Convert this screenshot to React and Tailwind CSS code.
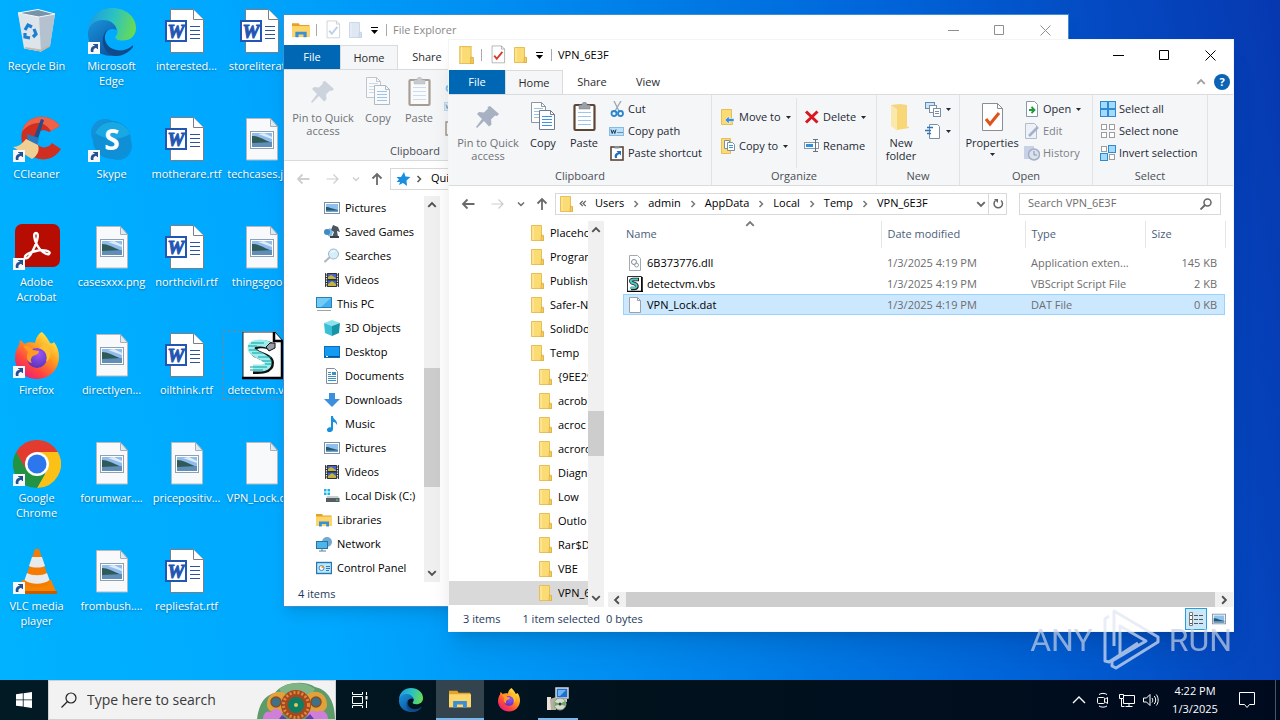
import clsx from 'clsx';

/* ---------- desktop icons ---------- */

const ShortcutArrow = () => (
  <g>
    <rect x="0" y="34" width="12" height="12" fill="#f6f8fb" />
    <path d="M3 44c-1-4 1-6 4-6.300L5 36.500V36h5v5h-.7L8 39.700C5.500 40.500 5 42 5.500 44z" fill="#24518f" />
  </g>
);

const RecycleBinIcon = () => (
  <svg viewBox="0 0 48 48" className="w-12 h-12">
    <path d="M5 5l20-3.500L42 6l-5 32-9 5.500-16-3z" fill="#d3dce4" />
    <path d="M5 5l20 3 17-2-5 32-9 5.500z" fill="#b4c2cf" />
    <path d="M5 5l21 3 2 35.500-17-3z" fill="#dde4ea" />
    <path d="M5 5l20-3.500L42 6l-16 3z" fill="#7793a8" stroke="#f4f8fb" strokeWidth="1" />
    <path d="M12 39l16 2.500 9-5-.5 2.500-8.500 4.500-16-3z" fill="#c9b5a8" />
    <g fill="none" stroke="#1c7fd1" strokeWidth="3.200">
      <path d="M12 22l3-5 4 2" />
      <path d="M21 21l2 5-3 3" />
      <path d="M17 30l-5-1v-4" />
    </g>
  </svg>
);

const EdgeIcon = ({ className = 'w-12 h-12', shortcut = false }) => (
  <svg viewBox="0 0 48 48" className={className}>
    <defs>
      <linearGradient id="edgeTop" x1="0" y1="0.4" x2="1" y2="0.6">
        <stop offset="0" stopColor="#1b9de2" />
        <stop offset="0.5" stopColor="#2cc3c0" />
        <stop offset="1" stopColor="#6bdc4f" />
      </linearGradient>
      <linearGradient id="edgeLeft" x1="0" y1="0" x2="0.6" y2="1">
        <stop offset="0" stopColor="#1a94dd" />
        <stop offset="1" stopColor="#0c59a4" />
      </linearGradient>
    </defs>
    <path d="M0 22C1 9 11 0 24 0c14 0 24 9 24 20 0 8-6 12.500-13 12.500-6 0-8.500-2-7.500-4 3-3 3-8-2-11C17 12 5 14 0 22z" fill="url(#edgeTop)" />
    <path d="M0 24c1-8 8-12 15-12 8 0 13.500 5 13.500 10-7-3-12 2-12 9 0 8 5 14 12 16.500C12 50-1 39 0 24z" fill="url(#edgeLeft)" />
    <path d="M20 21c-5 5-4 15 3 19 7 4 15 3 21-2 1-1 1.500 0 1 1-6 8-15 10-20 8.600C14 44 11 28 20 21z" fill="#114a8b" />
    {shortcut && <ShortcutArrow />}
  </svg>
);

const CCleanerIcon = () => (
  <svg viewBox="0 0 48 48" className="w-12 h-12">
    <path d="M47 10C36-4 13-2 9 16 5 34 22 46 34 43c6-1 11-5 14-10l-9-6c-4 6-13 6-16-1-3-8 5-15 13-10z" fill="#cf2f21" />
    <path d="M47 10C36-4 13-2 9 16c7-9 20-14 29-1z" fill="#ee6348" />
    <path d="M28 3l3 1-6 19-4-2z" fill="#254e88" />
    <path d="M14 18l12 4-2 8-9-3z" fill="#2b78bd" />
    <path d="M13 23l12 6c2 6-1 11-6 14L0 31c5 0 9-3 13-8z" fill="#f0cf94" />
    <ShortcutArrow />
  </svg>
);

const SkypeIcon = () => (
  <svg viewBox="0 0 48 48" className="w-12 h-12">
    <circle cx="17" cy="17" r="14" fill="#1591d8" />
    <circle cx="30" cy="30" r="14" fill="#0a93dc" />
    <circle cx="24" cy="24" r="19" fill="#0e8fd6" />
    <path d="M7 17a19 19 0 0 1 35 1c-10 7-25 6-35-1z" fill="#18a9e4" />
    <text x="24" y="34" textAnchor="middle" fontFamily="Open Sans, sans-serif" fontWeight="700" fontSize="28" fill="#fff">S</text>
    <ShortcutArrow />
  </svg>
);

const AcrobatIcon = () => (
  <svg viewBox="0 0 48 48" className="w-12 h-12">
    <rect x="2" y="0" width="45" height="43" rx="7" fill="#b70c02" />
    <path d="M23 9c-3 0-2 6 1 12s9 10 12 9c3-3-6-5-13-3-6 1-12 4-11 7 3 2 7-5 10-12s4-13 1-13z" fill="none" stroke="#fff" strokeWidth="2.400" strokeLinejoin="round" />
    <ShortcutArrow />
  </svg>
);

const FirefoxIcon = ({ className = 'w-12 h-12', shortcut = false }) => (
  <svg viewBox="0 0 48 48" className={className}>
    <defs>
      <linearGradient id="foxBody" x1="0.85" y1="0.05" x2="0.2" y2="0.95">
        <stop offset="0" stopColor="#fff24a" />
        <stop offset="0.4" stopColor="#ff9a1f" />
        <stop offset="0.75" stopColor="#ff4242" />
        <stop offset="1" stopColor="#e6207b" />
      </linearGradient>
      <radialGradient id="foxGlobe" cx="0.6" cy="0.3" r="0.8">
        <stop offset="0" stopColor="#9a55f5" />
        <stop offset="1" stopColor="#5130b5" />
      </radialGradient>
    </defs>
    <path d="M29 0c4 4 6 7 8 11 2 1 3 0 4-1 3 4 5 9 5 15 0 13-10 22-22 22S2 38 2 26c0-6 2-10 4-13l1-5c2 1 3 2 4 4 4-2 8-2 11-1 1-5 3-9 7-11z" fill="url(#foxBody)" />
    <circle cx="24" cy="26" r="10" fill="url(#foxGlobe)" />
    <path d="M10 14c5-1 8 1 10 4l6 1c0 3-3 4-6 5-2 2-3 4-1 7-6-1-6-7-4-11z" fill="#ff9a24" />
    <path d="M26 16c7 2 9 8 7 14 6-4 6-13-1-19z" fill="#ffbf33" />
    {shortcut && <ShortcutArrow />}
  </svg>
);

const ChromeIcon = () => (
  <svg viewBox="0 0 48 48" className="w-12 h-12">
    <path d="M3.200 12A24 24 0 0 1 44.800 12L24 24z" fill="#e33b2e" />
    <path d="M44.800 12A24 24 0 0 1 24 48l10-18-10-18z" fill="#fbc116" />
    <path d="M24 48A24 24 0 0 1 3.200 12L14 30l18 4z" fill="#229342" />
    <path d="M3.200 12L13.600 30 24 12h20.800L24 8z" fill="#e33b2e" />
    <circle cx="24" cy="24" r="12" fill="#fff" />
    <circle cx="24" cy="24" r="9.500" fill="#2d77ee" />
    <ShortcutArrow />
  </svg>
);

const VlcIcon = () => (
  <svg viewBox="0 0 48 48" className="w-12 h-12">
    <path d="M9 32h29l6 14H4z" fill="#f78400" />
    <path d="M4 43h40v3H4z" fill="#c85c00" />
    <path d="M22 1h4l11 34c-5 6-21 6-26 0z" fill="#f57c00" />
    <path d="M19 9h10l3 9c-4 2-12 2-16 0z" fill="#e9eaec" />
    <path d="M14 25c5 3 15 3 20 0l2.500 7c-6 5-19 5-25 0z" fill="#e9eaec" />
    <ShortcutArrow />
  </svg>
);

const WordIcon = () => (
  <svg viewBox="0 0 48 48" className="w-12 h-12">
    <path d="M7.500 1.500h23l10 10v33h-33z" fill="#fff" stroke="#7a7f86" />
    <path d="M30.500 1.500v10h10" fill="#fff" stroke="#7a7f86" />
    <path d="M27 18.500h10M27 22.500h10M27 26.500h10M27 30.500h10" stroke="#2b579a" strokeWidth="1" />
    <rect x="3" y="13" width="20" height="20" fill="#fff" stroke="#2356b2" strokeWidth="2" />
    <text x="13" y="30" textAnchor="middle" fontFamily="Liberation Serif, serif" fontWeight="700" fontStyle="italic" fontSize="19" fill="#2356b2" stroke="#2356b2">W</text>
  </svg>
);

const BlankPage = () => (
  <g>
    <path d="M8.500 2.500h24l7 8v33.500h-31z" fill="#f8f9fa" stroke="#b4bac0" />
    <path d="M32.500 2.500v8h7z" fill="#dfeaf2" stroke="#a5b0ba" />
  </g>
);

const Landscape = () => (
  <g>
    <rect x="12.500" y="15.500" width="23" height="17" fill="#fff" stroke="#8fa0b0" />
    <rect x="14" y="17" width="20" height="14" fill="#8fbcec" />
    <path d="M14 20c6 0 10 3 20 7v4H14z" fill="#2f5a58" />
    <path d="M14 27l20-1v5H14z" fill="#5f8eb8" />
    <path d="M20 18l6-1 8 4v2z" fill="#dcecf9" />
  </g>
);

const ImageFileIcon = () => (
  <svg viewBox="0 0 48 48" className="w-12 h-12">
    <BlankPage />
    <Landscape />
  </svg>
);

const BlankFileIcon = () => (
  <svg viewBox="0 0 48 48" className="w-12 h-12">
    <BlankPage />
  </svg>
);

const ScriptIcon = ({ className = 'w-12 h-12' }) => (
  <svg viewBox="0 0 48 48" className={className}>
    <path d="M5 0h32l8 9v37H5z" fill="#fff" stroke="#222" strokeWidth="1" />
    <path d="M36 0v9h9M44 9v37M4 46h41" fill="none" stroke="#000" strokeWidth="2.500" />
    <path d="M33 15c-4-4-18-4-18 2 0 7 17 7 17 14 0 7-9 7-17 7" fill="none" stroke="#111" strokeWidth="8" />
    <path d="M31 13c-5-3-18-3-18 3 0 7 17 8 17 15 0 6-9 5-15 5" fill="none" stroke="#9aeeee" strokeWidth="7" />
    <path d="M13 11h13M10 14h9M11 18h9M14 21h11M20 25h13M24 29h10M27 32h7M12 35h17M12 38h13" stroke="#0f9a9c" strokeWidth="1" />
    <path d="M28 15l4-4h5v5l-6 3z" fill="#9aa0a6" stroke="#111" />
  </svg>
);

/* ---------- small icons ---------- */

const FolderIcon = ({ className = 'w-4 h-4' }) => (
  <svg viewBox="0 0 16 16" className={clsx('shrink-0', className)}>
    <path d="M2.500.5h10V12l2 1v2.500h-12z" fill="#fbdc74" stroke="#e9bf55" />
    <path d="M12.500 10l2 .5v5h-2.500z" fill="#f6cf5c" stroke="#e0b348" />
    <path d="M4 1v14" stroke="#fdebab" />
  </svg>
);

const ExplorerIcon = ({ className = 'w-4 h-4' }) => (
  <svg viewBox="0 0 16 16" className={clsx('shrink-0', className)}>
    <path d="M0 2h6l1 1.500h8.500V14H0z" fill="#e6a12a" />
    <path d="M0 4.500h16V14H0z" fill="#fdd568" />
    <path d="M3 14.500V9.500h10v5h-2.800V12H5.800v2.500z" fill="#3b8fd4" />
  </svg>
);

const PictureIcon = ({ className = 'w-4 h-4' }) => (
  <svg viewBox="0 0 16 16" className={clsx('shrink-0', className)}>
    <rect x=".5" y="2.500" width="15" height="11" fill="#fff" stroke="#7d8fa3" />
    <rect x="2" y="4" width="12" height="8" fill="#8cc1ef" />
    <path d="M2 7c4 0 6 2 12 3v2H2z" fill="#29566a" />
    <path d="M2 10.500h12V12H2z" fill="#6ba3cf" />
  </svg>
);

const GamesIcon = () => (
  <svg viewBox="0 0 16 16" className="w-4 h-4 shrink-0">
    <path d="M3 6l3-2 3 4-2 5-3-1z" fill="#7db8df" />
    <circle cx="3" cy="8" r="3" fill="#3e8ac4" />
    <path d="M9 1l5 2 2 5-3-1 1 6H8l2-5-3-2z" fill="#4c5661" />
    <path d="M6 12h9v2H6z" fill="#39424c" />
  </svg>
);

const SearchesIcon = () => (
  <svg viewBox="0 0 16 16" className="w-4 h-4 shrink-0">
    <path d="M6 9l-5.500 5" stroke="#b0b7be" strokeWidth="2" />
    <circle cx="9.500" cy="6" r="5" fill="#d6edfa" stroke="#9fb6c6" />
    <path d="M7 5c1-2 3-2 4-2" stroke="#fff" fill="none" />
  </svg>
);

const VideosIcon = () => (
  <svg viewBox="0 0 16 16" className="w-4 h-4 shrink-0">
    <rect x="1" y="1" width="14" height="14" fill="#2c3136" />
    <path d="M2.500 1v14M13.500 1v14" stroke="#e8e8e8" strokeWidth="1.200" strokeDasharray="1.500 1" />
    <rect x="4" y="2" width="8" height="5" fill="#4d63c8" />
    <rect x="4" y="8.500" width="8" height="5.500" fill="#3c62c4" />
    <path d="M4 5l3-2 5 3v1H4zM4 12l4-3 4 3v2H4z" fill="#c3b340" />
  </svg>
);

const ComputerIcon = () => (
  <svg viewBox="0 0 16 16" className="w-4 h-4 shrink-0">
    <rect x=".5" y="1.500" width="15" height="10" fill="#3fb2ee" stroke="#2a7fb8" />
    <path d="M1 2h14L5 11H1z" fill="#73ccf6" />
    <path d="M1 14.500h14" stroke="#9aa4ad" />
  </svg>
);

const CubeIcon = () => (
  <svg viewBox="0 0 16 16" className="w-4 h-4 shrink-0">
    <path d="M0 3l8-3 8 3-8 3z" fill="#8be3ee" />
    <path d="M0 3l8 3v10l-7-3z" fill="#39c0d4" />
    <path d="M16 3L8 6v10l7-3z" fill="#1793aa" />
  </svg>
);

const DesktopIcon = () => (
  <svg viewBox="0 0 16 16" className="w-4 h-4 shrink-0">
    <rect x=".5" y="2.500" width="15" height="11" fill="#149bf0" stroke="#0a6ec0" />
    <path d="M1 12.500h14" stroke="#0b4f90" />
    <path d="M2 12.500h2" stroke="#fff" />
  </svg>
);

const DocumentsIcon = () => (
  <svg viewBox="0 0 16 16" className="w-4 h-4 shrink-0">
    <path d="M2.500.5h8l3 3v12h-11z" fill="#fff" stroke="#83909c" />
    <path d="M4 4.500h3M4 6.500h3M4 8.500h8M4 10.500h8M4 12.500h8" stroke="#3f8fc4" />
    <rect x="8" y="4" width="4" height="3" fill="#3f8fc4" />
  </svg>
);

const DownloadsIcon = () => (
  <svg viewBox="0 0 16 16" className="w-4 h-4 shrink-0">
    <path d="M5 1h6v6h5l-8 8-8-8h5z" fill="#3b8fdc" />
  </svg>
);

const MusicIcon = () => (
  <svg viewBox="0 0 16 16" className="w-4 h-4 shrink-0">
    <path d="M7 0h2c0 4 5 4 4 9-1-2-2-3-4-3v7c0 4-6 4-6 1 0-2 2-3 4-2.500z" fill="#1490dc" />
  </svg>
);

const DiskIcon = () => (
  <svg viewBox="0 0 16 16" className="w-4 h-4 shrink-0">
    <path d="M0 1h2.500v2.500H0zM3.500 1H6v2.500H3.500zM0 4.500h2.500V7H0zM3.500 4.500H6V7H3.500z" fill="#19b5ea" />
    <path d="M3 8h11l1.500 2.500H2z" fill="#c9ced2" />
    <rect x="2" y="10" width="13.500" height="4" fill="#555d63" />
    <rect x="12" y="11.500" width="2" height="1" fill="#58e08a" />
  </svg>
);

const NetworkPcIcon = () => (
  <svg viewBox="0 0 16 16" className="w-4 h-4 shrink-0">
    <circle cx="11" cy="6" r="5" fill="#6fa9d4" />
    <rect x=".5" y="5.500" width="11" height="7" fill="#4bb6ea" stroke="#2a72a5" />
    <path d="M3 15h7M6 13v2" stroke="#5d7d92" />
  </svg>
);

const ControlPanelIcon = () => (
  <svg viewBox="0 0 16 16" className="w-4 h-4 shrink-0">
    <rect x=".5" y="2.500" width="15" height="11" fill="#bfe5f8" stroke="#2478b3" strokeWidth="1.400" />
    <circle cx="5.500" cy="8" r="2.500" fill="#fff" stroke="#3a8cc4" />
    <path d="M10 6.500h4M10 8.500h4M10 10.500h3" stroke="#2f7cb8" />
    <path d="M5.500 8V5.500A2.500 2.500 0 0 1 8 8z" fill="#f0a030" />
  </svg>
);

const CaretDown = ({ className = 'w-[7px] h-1' }) => (
  <svg viewBox="0 0 7 4" className={clsx('shrink-0', className)}>
    <path d="M0 0h7L3.500 4z" fill="currentColor" />
  </svg>
);

const Chevron = ({ dir = 'right', className = 'w-2 h-2' }) => {
  const paths = {
    right: 'M2.500 1l3 3-3 3',
    down: 'M1 2.500l3 3 3-3',
    up: 'M1 5.500l3-3 3 3',
    left: 'M5.500 1l-3 3 3 3'
  };
  return (
    <svg viewBox="0 0 8 8" className={clsx('shrink-0', className)}>
      <path d={paths[dir]} fill="none" stroke="currentColor" strokeWidth="1.500" />
    </svg>
  );
};

const Arrow = ({ dir = 'left' }) => {
  const paths = {
    left: 'M13.500 7H2M6.500 2.500L2 7l4.500 4.500',
    right: 'M.5 7H12M7.500 2.500L12 7l-4.500 4.500',
    up: 'M7 13V2M2.500 6.500L7 2l4.500 4.500'
  };
  return (
    <svg viewBox="0 0 14 14" className="w-3.5 h-3.5">
      <path d={paths[dir]} fill="none" stroke="currentColor" strokeWidth={dir === 'right' ? 1.2 : 1.8} />
    </svg>
  );
};

/* ---------- ribbon icons ---------- */

const PinIcon = () => (
  <svg viewBox="0 0 32 32" className="w-8 h-8">
    <path d="M18 4l9 8-2 2-2-.5-4 4 .5 5-2.500 2-5-5.500L5 26l-1-1 6-8-5-5 2-2 5 .5 4-4-.5-1.500z" fill="#a7b1c2" />
  </svg>
);

const CopyIcon = () => (
  <svg viewBox="0 0 32 32" className="w-8 h-8">
    <path d="M4.500.5h10l4 4v16h-14z" fill="#fff" stroke="#8a97a8" />
    <path d="M14.500.5v4h4" fill="none" stroke="#8a97a8" />
    <path d="M7 6.500h9M7 9.500h9M7 12.500h9M7 15.500h9" stroke="#9dbfe2" />
    <path d="M12.500 8.500h11l4 4v15h-15z" fill="#fff" stroke="#6f7d8e" />
    <path d="M23.500 8.500v4h4" fill="none" stroke="#6f7d8e" />
    <path d="M15 14.500h10M15 17.500h10M15 20.500h10M15 23.500h10" stroke="#3d94e6" />
  </svg>
);

const PasteIcon = () => (
  <svg viewBox="0 0 32 32" className="w-8 h-8">
    <rect x="6.500" y="3" width="20" height="25" rx="1" fill="#fff" stroke="#5b4636" strokeWidth="2.200" />
    <path d="M10 10.500h13M10 14.500h13M10 18.500h13M10 22.500h13" stroke="#9cc6ea" />
    <path d="M11 7V3h3c0-4 5-4 5 0h3v4z" fill="#9aa0a6" stroke="#757a80" strokeWidth=".5" />
  </svg>
);

const CutIcon = () => (
  <svg viewBox="0 0 16 16" className="w-4 h-4">
    <path d="M5 0l5 10M12 0L6 10" stroke="#9aa7b4" strokeWidth="1.300" />
    <circle cx="5" cy="12.500" r="2.500" fill="none" stroke="#2a86cf" strokeWidth="1.800" />
    <circle cx="11.500" cy="12.500" r="2.500" fill="none" stroke="#2a86cf" strokeWidth="1.800" />
  </svg>
);

const CopyPathIcon = () => (
  <svg viewBox="0 0 16 16" className="w-4 h-4">
    <rect x=".5" y="4.500" width="14" height="8" fill="#bfe1f8" stroke="#84bce6" />
    <path d="M2 6.500l1.200 4L4.500 7l1.300 3.500L7 6.500" fill="none" stroke="#193a5c" />
    <path d="M8.500 9.500h5" stroke="#193a5c" strokeDasharray="1 1" />
  </svg>
);

const PasteShortcutIcon = () => (
  <svg viewBox="0 0 16 16" className="w-4 h-4">
    <rect x="2" y="2" width="12" height="13" fill="#fff" stroke="#5b4636" strokeWidth="1.600" />
    <path d="M5.500 1h5v2.500h-5z" fill="#8a8f95" />
    <path d="M6 13c-1-4 1-5 3-5.500L7.500 6H12v4.500L10.500 9C8 10 7.500 11 8 13z" fill="#1f6fbf" />
  </svg>
);

const MoveToIcon = () => (
  <svg viewBox="0 0 16 16" className="w-4 h-4">
    <path d="M1.500.5h10V12l1 1v2.500h-11z" fill="#fbdc74" stroke="#e9bf55" />
    <path d="M5 11l4-4v2.500h5v3H9V15z" fill="#3b8fdc" stroke="#fff" strokeWidth=".5" />
  </svg>
);

const CopyToIcon = () => (
  <svg viewBox="0 0 16 16" className="w-4 h-4">
    <path d="M1.500.5h9v15h-9z" fill="#fbdc74" stroke="#e9bf55" />
    <path d="M4.500 2.500h5v8h-5z" fill="#fff" stroke="#7b8ea3" />
    <path d="M7.500 4.500h5l2 2v6h-7z" fill="#fff" stroke="#7b8ea3" />
    <path d="M9 7.500h4M9 9.500h4" stroke="#3d94e6" />
  </svg>
);

const DeleteIcon = () => (
  <svg viewBox="0 0 16 16" className="w-4 h-4">
    <path d="M2 2.500l11.500 11M13.500 2.500L2 13.500" stroke="#d8171f" strokeWidth="3" />
  </svg>
);

const RenameIcon = () => (
  <svg viewBox="0 0 16 16" className="w-4 h-4">
    <rect x=".5" y="4.500" width="14" height="6" fill="#fff" stroke="#8c9aa8" />
    <rect x="2" y="6" width="7" height="3" fill="#2f8fe0" />
    <path d="M9 1.500h5M11.500 1.500v12M9 13.500h5" stroke="#66727f" />
  </svg>
);

const NewFolderIcon = () => (
  <svg viewBox="0 0 32 32" className="w-8 h-8">
    <path d="M6 3l9-1 7 1v21H6z" fill="#f4d584" />
    <path d="M6 3l6 4v22l-6-5z" fill="#fbe8ad" />
    <path d="M12 7l9-3v20l3 1v1l-12 2z" fill="#f8d776" />
  </svg>
);

const NewItemIcon = () => (
  <svg viewBox="0 0 16 16" className="w-4 h-4">
    <rect x=".5" y="1.500" width="9" height="6" fill="#cfe5f7" stroke="#5c8db8" />
    <rect x="4.500" y="4.500" width="7" height="7" fill="#fff" stroke="#7b8ea3" />
    <rect x="8.500" y="7.500" width="7" height="8" fill="#fff" stroke="#7b8ea3" />
    <path d="M10 10.500h4M10 12.500h4" stroke="#7b8ea3" />
  </svg>
);

const EasyAccessIcon = () => (
  <svg viewBox="0 0 16 16" className="w-4 h-4">
    <path d="M4.500 1.500h8l2 2v12h-10z" fill="#fff" stroke="#7b8ea3" />
    <path d="M2 4.500h6M0 7.500h6M2 10.500h4" stroke="#2b74b8" strokeWidth="1.500" />
  </svg>
);

const PropertiesIcon = ({ className = 'w-8 h-8', tick = '#e0521c' }) => (
  <svg viewBox="0 0 32 32" className={className}>
    <path d="M6.500 1.500h15l5 5v22h-20z" fill="#fff" stroke="#8a8f95" />
    <path d="M21.500 1.500v5h5" fill="none" stroke="#8a8f95" />
    <path d="M10 17l4 5 9-11" fill="none" stroke={tick} strokeWidth="3" />
  </svg>
);

const OpenIcon = () => (
  <svg viewBox="0 0 16 16" className="w-4 h-4">
    <path d="M2.500.5h8l3 3v12h-11z" fill="#fff" stroke="#8a97a8" />
    <path d="M5 9h4.500M7.500 6l3 3-3 3" fill="none" stroke="#1c9a3c" strokeWidth="1.800" />
  </svg>
);

const EditIcon = () => (
  <svg viewBox="0 0 16 16" className="w-4 h-4">
    <path d="M1.500.5h9l2 2v13h-11z" fill="#eef1f8" stroke="#b3bccb" />
    <path d="M5 13L14 4" stroke="#a3b1ca" strokeWidth="2.500" />
  </svg>
);

const HistoryIcon = () => (
  <svg viewBox="0 0 16 16" className="w-4 h-4">
    <path d="M0 1h10v13H0z" fill="#c9d1e6" />
    <circle cx="10" cy="9.500" r="5.500" fill="#dbe2ee" stroke="#a3afc4" strokeWidth="1.500" />
    <path d="M10 6v4h3" fill="none" stroke="#8593ad" />
  </svg>
);

const TilesIcon = ({ filled }) => (
  <svg viewBox="0 0 16 16" className="w-4 h-4">
    {[[1, 1], [9, 1], [1, 9], [9, 9]].map(([x, y], i) => {
      const on = filled.includes(i);
      return (
        <rect
          key={i}
          x={on ? x - 0.5 : x + 0.5}
          y={on ? y - 0.5 : y + 0.5}
          width={on ? 7 : 5}
          height={on ? 7 : 5}
          fill={on ? '#a5dafa' : '#fff'}
          stroke={on ? '#2d8bd6' : '#9d9d9d'}
        />
      );
    })}
  </svg>
);

/* ---------- explorer window ---------- */

const BigButton = ({ icon, label, className, faded, caret }) => (
  <button className={clsx('flex flex-col items-center justify-start pt-1 leading-[13px]', className, faded && 'text-[#6d7278]')}>
    {icon}
    <span className="mt-0.5">{label}</span>
    {caret && <CaretDown className="w-[5px] h-[3px] mt-1" />}
  </button>
);

const SmallButton = ({ icon, label, caret, faded }) => (
  <button className={clsx('flex items-center gap-[3px] h-[22px] whitespace-nowrap', faded && 'text-[#7d8188]')}>
    {icon}
    {label && <span>{label}</span>}
    {caret && <CaretDown className="w-[5px] h-[3px] ml-0.5" />}
  </button>
);

const RibbonGroup = ({ label, className, children }) => (
  <section className={clsx('flex flex-col shrink-0 pt-[3px] pb-px border-r border-[#e1e3e6]', className)}>
    <div className="flex h-[70px]">{children}</div>
    <h2 className="h-4 text-center leading-4 text-[#4a4f55]">{label}</h2>
  </section>
);

const ribbonFrame = 'flex h-[92px] shrink-0 bg-[#f5f6f7] border-y border-[#dadbdc] overflow-hidden';

const InactiveRibbon = () => (
  <div className={clsx(ribbonFrame, 'text-[#6d7278] [&_svg]:opacity-50')}>
    <RibbonGroup label="Clipboard" className="w-[263px]">
      <BigButton icon={<PinIcon />} label={<>Pin to Quick<br />access</>} className="w-[78px]" />
      <BigButton icon={<CopyIcon />} label="Copy" className="w-8" />
      <BigButton icon={<PasteIcon />} label="Paste" className="w-[50px]" />
      <div className="flex flex-col">
        <SmallButton icon={<CutIcon />} />
        <SmallButton icon={<CopyPathIcon />} />
        <SmallButton icon={<PasteShortcutIcon />} />
      </div>
    </RibbonGroup>
  </div>
);

const Ribbon = () => (
  <div className={clsx(ribbonFrame, 'text-[#1e2a36]')}>
    <RibbonGroup label="Clipboard" className="w-[263px]">
      <BigButton icon={<PinIcon />} label={<>Pin to Quick<br />access</>} className="w-[78px]" faded />
      <BigButton icon={<CopyIcon />} label="Copy" className="w-8" />
      <BigButton icon={<PasteIcon />} label="Paste" className="w-[50px]" />
      <div className="flex flex-col">
        <SmallButton icon={<CutIcon />} label="Cut" />
        <SmallButton icon={<CopyPathIcon />} label="Copy path" />
        <SmallButton icon={<PasteShortcutIcon />} label="Paste shortcut" />
      </div>
    </RibbonGroup>
    <RibbonGroup label="Organize" className="w-[165px]">
      <div className="flex flex-col gap-[7px] pt-2 pl-2 w-[85px] border-r border-[#e1e3e6]">
        <SmallButton icon={<MoveToIcon />} label="Move to" caret />
        <SmallButton icon={<CopyToIcon />} label="Copy to" caret />
      </div>
      <div className="flex flex-col gap-[7px] pt-2 pl-[7px]">
        <SmallButton icon={<DeleteIcon />} label="Delete" caret />
        <SmallButton icon={<RenameIcon />} label="Rename" />
      </div>
    </RibbonGroup>
    <RibbonGroup label="New" className="w-[83px]">
      <BigButton icon={<NewFolderIcon />} label={<>New<br />folder</>} className="w-12" />
      <div className="flex flex-col">
        <SmallButton icon={<NewItemIcon />} caret />
        <SmallButton icon={<EasyAccessIcon />} caret />
      </div>
    </RibbonGroup>
    <RibbonGroup label="Open" className="w-[133px]">
      <BigButton icon={<PropertiesIcon />} label="Properties" className="w-16" caret />
      <div className="flex flex-col">
        <SmallButton icon={<OpenIcon />} label="Open" caret />
        <SmallButton icon={<EditIcon />} label="Edit" faded />
        <SmallButton icon={<HistoryIcon />} label="History" faded />
      </div>
    </RibbonGroup>
    <RibbonGroup label="Select" className="w-[115px]">
      <div className="flex flex-col pl-[7px]">
        <SmallButton icon={<TilesIcon filled={[0, 1, 2, 3]} />} label="Select all" />
        <SmallButton icon={<TilesIcon filled={[]} />} label="Select none" />
        <SmallButton icon={<TilesIcon filled={[1, 2]} />} label="Invert selection" />
      </div>
    </RibbonGroup>
  </div>
);

const WindowControls = ({ active }) => (
  <div className={clsx('ml-auto flex', active ? 'text-black' : 'text-[#8f8f8f]')}>
    <button aria-label="Minimize" className="w-[46px] flex items-center justify-center">
      <svg viewBox="0 0 11 11" className="w-[11px] h-[11px]"><path d="M0 5.500h11" stroke="currentColor" /></svg>
    </button>
    <button aria-label="Maximize" className="w-[46px] flex items-center justify-center">
      <svg viewBox="0 0 11 11" className="w-[11px] h-[11px]"><path d="M.5.5h9v9h-9z" fill="none" stroke="currentColor" /></svg>
    </button>
    <button aria-label="Close" className="w-[46px] flex items-center justify-center">
      <svg viewBox="0 0 11 11" className="w-[11px] h-[11px]"><path d="M.5.5l10 10M10.500.5l-10 10" stroke="currentColor" /></svg>
    </button>
  </div>
);

const TitleBar = ({ title, icon, active }) => (
  <header className="flex h-[30px] shrink-0 pl-2">
    <div className="flex items-center">
      {icon}
      <span className="w-px h-3 bg-[#a9a9a9] ml-1.5" />
      <div className={clsx('flex items-center', !active && 'opacity-60')}>
        <button aria-label="Properties" className="ml-1.5">
          <PropertiesIcon className="w-5 h-5" tick={active ? '#d83a2c' : '#8fb2da'} />
        </button>
        <button aria-label="New folder" className="ml-1">
          <FolderIcon className={clsx('w-4 h-4', !active && 'hue-rotate-180 saturate-50')} />
        </button>
      </div>
      <button aria-label="Customize toolbar" className="ml-2 flex flex-col items-center gap-0.5">
        <span className="w-[7px] h-px bg-black" />
        <CaretDown className="w-[7px] h-1" />
      </button>
      <span className="w-px h-3 bg-[#a9a9a9] ml-2" />
      <h1 className={clsx('ml-1.5', active ? 'text-black' : 'text-[#8a8a8a]')}>{title}</h1>
    </div>
    <WindowControls active={active} />
  </header>
);

const tabButtons = (
  <>
    <button className="w-14 bg-[#0067b4] text-white">File</button>
    <button className="w-[58px] h-[25px] bg-[#f5f6f7] border border-b-0 border-[#dadbdc]">Home</button>
    <button className="w-[58px]">Share</button>
  </>
);

const NavButtons = ({ active }) => (
  <div className="flex items-center w-[106px] shrink-0 pl-3 text-[#6a6a6a]">
    <button aria-label="Back" className={clsx(!active && 'text-[#cfcfcf]')}><Arrow dir="left" /></button>
    <button aria-label="Forward" className="ml-4 text-[#cdcdcd]"><Arrow dir="right" /></button>
    <button aria-label="Recent" className={clsx('ml-3', !active && 'text-[#cfcfcf]')}><Chevron dir="down" /></button>
    <button aria-label="Up" className="ml-2.5"><Arrow dir="up" /></button>
  </div>
);

const TreeItem = ({ icon, label, className, selected }) => (
  <li>
    <button
      className={clsx(
        'flex items-center gap-[5px] w-full h-6 whitespace-nowrap overflow-hidden text-black',
        selected && 'bg-[#d9d9d9]',
        className
      )}
    >
      {icon}
      <span>{label}</span>
    </button>
  </li>
);

const VerticalScrollbar = ({ thumb }) => (
  <div className="flex flex-col items-center w-4 shrink-0 bg-[#f0f0f0] text-[#505050]">
    <button aria-label="Scroll up" className="h-[18px]"><Chevron dir="up" className="w-2.5 h-2.5" /></button>
    <div className="flex flex-col w-full flex-1">
      <div className={clsx('w-full bg-[#cdcdcd]', thumb)} />
    </div>
    <button aria-label="Scroll down" className="h-[18px]"><Chevron dir="down" className="w-2.5 h-2.5" /></button>
  </div>
);

const libraryItems = [
  { label: 'Pictures', icon: <PictureIcon /> },
  { label: 'Saved Games', icon: <GamesIcon /> },
  { label: 'Searches', icon: <SearchesIcon /> },
  { label: 'Videos', icon: <VideosIcon /> },
  { label: 'This PC', icon: <ComputerIcon />, top: true },
  { label: '3D Objects', icon: <CubeIcon /> },
  { label: 'Desktop', icon: <DesktopIcon /> },
  { label: 'Documents', icon: <DocumentsIcon /> },
  { label: 'Downloads', icon: <DownloadsIcon /> },
  { label: 'Music', icon: <MusicIcon /> },
  { label: 'Pictures', icon: <PictureIcon /> },
  { label: 'Videos', icon: <VideosIcon /> },
  { label: 'Local Disk (C:)', icon: <DiskIcon /> },
  { label: 'Libraries', icon: <ExplorerIcon />, top: true },
  { label: 'Network', icon: <NetworkPcIcon />, top: true },
  { label: 'Control Panel', icon: <ControlPanelIcon />, top: true }
];

const folderItems = [
  { label: 'Placeho' },
  { label: 'Program' },
  { label: 'Publish' },
  { label: 'Safer-N' },
  { label: 'SolidDo' },
  { label: 'Temp' },
  { label: '{9EE29', nested: true },
  { label: 'acrob', nested: true },
  { label: 'acroc', nested: true },
  { label: 'acrord', nested: true },
  { label: 'Diagn', nested: true },
  { label: 'Low', nested: true },
  { label: 'Outlo', nested: true },
  { label: 'Rar$D', nested: true },
  { label: 'VBE', nested: true },
  { label: 'VPN_6', nested: true, selected: true }
];

const DllIcon = () => (
  <svg viewBox="0 0 16 16" className="w-4 h-4">
    <path d="M2.500.5h8l3 3v12h-11z" fill="#fff" stroke="#a3a9b0" />
    <circle cx="7" cy="7" r="2.500" fill="none" stroke="#7b8894" />
    <circle cx="9.500" cy="10" r="2" fill="none" stroke="#97a3ae" />
  </svg>
);

const SmallScriptIcon = () => (
  <svg viewBox="0 0 16 16" className="w-4 h-4">
    <path d="M.5.5h14v15H.5z" fill="#fff" stroke="#333" />
    <path d="M15 1v15M0 15.500h16" stroke="#000" strokeWidth="1.500" />
    <path d="M12 3.500H6C2 4 4 7 7 7.500s5 5 0 5H4" fill="none" stroke="#222" strokeWidth="3.500" />
    <path d="M11 3.500H6C2 4 4 7 7 7.500s4 4.500 0 4.500H3" fill="none" stroke="#4fc9c6" strokeWidth="2" />
  </svg>
);

const SmallFileIcon = () => (
  <svg viewBox="0 0 16 16" className="w-4 h-4">
    <path d="M2.500.5h8l3 3v12h-11z" fill="#fff" stroke="#9aa1a8" />
    <path d="M10.500.5v3h3" fill="none" stroke="#9aa1a8" />
  </svg>
);

const files = [
  { name: '6B373776.dll', date: '1/3/2025 4:19 PM', type: 'Application exten...', size: '145 KB', icon: <DllIcon /> },
  { name: 'detectvm.vbs', date: '1/3/2025 4:19 PM', type: 'VBScript Script File', size: '2 KB', icon: <SmallScriptIcon /> },
  { name: 'VPN_Lock.dat', date: '1/3/2025 4:19 PM', type: 'DAT File', size: '0 KB', icon: <SmallFileIcon />, selected: true }
];

const FileTable = () => (
  <table className="table-fixed w-[602px] ml-[15px] border-collapse text-[#6d6d6d]">
    <colgroup>
      <col className="w-[258px]" />
      <col className="w-36" />
      <col className="w-[120px]" />
      <col className="w-20" />
    </colgroup>
    <thead>
      <tr className="h-[27px] text-left text-[#4c607a]">
        <th className="relative font-normal pl-[3px] border-r border-[#e5e5e5]">
          Name
          <span className="absolute -top-0.5 left-[122px] text-[#7a7a7a]"><Chevron dir="up" className="w-2.5 h-2.5" /></span>
        </th>
        <th className="font-normal pl-1.5 border-r border-[#e5e5e5]">Date modified</th>
        <th className="font-normal pl-1.5 border-r border-[#e5e5e5]">Type</th>
        <th className="font-normal pl-1.5 border-r border-[#e5e5e5]">Size</th>
      </tr>
      <tr className="h-1" />
    </thead>
    <tbody>
      {files.map((file) => (
        <tr
          key={file.name}
          className={clsx('h-[21px] leading-4', file.selected && 'bg-[#cce8ff] outline outline-1 -outline-offset-1 outline-[#99d1ff]')}
        >
          <td className="pl-1">
            <span className="flex items-center gap-1 text-black">
              {file.icon}
              {file.name}
            </span>
          </td>
          <td className="pl-1.5">{file.date}</td>
          <td className="pl-1.5">{file.type}</td>
          <td className="pr-2 text-right">{file.size}</td>
        </tr>
      ))}
    </tbody>
  </table>
);

const crumbs = ['Users', 'admin', 'AppData', 'Local', 'Temp', 'VPN_6E3F'];

const LibraryWindow = () => (
  <div className="absolute left-[283px] top-3.5 w-[786px] h-[593px] flex flex-col bg-white border border-[#3d8fd0] text-[11px] shadow-lg">
    <TitleBar title="File Explorer" icon={<ExplorerIcon className="w-[18px] h-[18px]" />} />
    <div className="flex h-6 shrink-0 text-[#2b2b2b]">{tabButtons}</div>
    <InactiveRibbon />
    <div className="flex items-center h-[35px] shrink-0">
      <NavButtons />
      <div className="flex items-center flex-1 h-[22px] mr-3 pl-1 border border-[#d9d9d9]">
        <svg viewBox="0 0 16 16" className="w-4 h-4">
          <path d="M9 1l1.500 4.500 5 .5-4 3.500L12 15 8 12l-4 2 1-3H1.500L4 8.500 1.500 6H6z" fill="#1a8fe0" />
        </svg>
        <span className="ml-1 text-[#555]"><Chevron /></span>
        <span className="ml-2 text-black">Qui</span>
      </div>
    </div>
    <div className="flex flex-1 min-h-0">
      <ul className="w-[140px] overflow-hidden">
        {libraryItems.map((item, i) => (
          <TreeItem key={i} icon={item.icon} label={item.label} className={item.top ? 'pl-8' : 'pl-10'} />
        ))}
      </ul>
      <VerticalScrollbar thumb="mt-[154px] h-[119px]" />
    </div>
    <footer className="flex items-center h-6 shrink-0 pl-3.5 text-[#1e395b]">4 items</footer>
  </div>
);

const VpnWindow = () => (
  <div className="absolute left-[448px] top-[39px] w-[786px] h-[593px] flex flex-col bg-white border border-[#f2f5f8] text-[11px] shadow-xl">
    <TitleBar title="VPN_6E3F" icon={<FolderIcon className="w-[18px] h-[18px]" />} active />
    <div className="flex h-6 shrink-0 text-[#2b2b2b]">
      {tabButtons}
      <button className="w-[54px]">View</button>
      <div className="ml-auto flex items-center gap-2 pr-[3px]">
        <button aria-label="Collapse ribbon" className="text-[#a0a0a0]"><Chevron dir="up" className="w-2.5 h-2.5" /></button>
        <button aria-label="Help" className="w-4 h-4 rounded-full bg-[#0a63b4] text-white font-bold leading-4">?</button>
      </div>
    </div>
    <Ribbon />
    <div className="flex items-center h-[35px] shrink-0">
      <NavButtons active />
      <div className="flex items-center flex-1 h-[22px] border border-[#d9d9d9] text-black">
        <FolderIcon className="w-4 h-4 ml-0.5" />
        <span className="ml-1 flex text-[#666]">
          <Chevron dir="left" className="w-[7px] h-[7px]" />
          <Chevron dir="left" className="w-[7px] h-[7px] -ml-1" />
        </span>
        <nav className="flex items-center ml-1">
          {crumbs.map((crumb, i) => (
            <div key={crumb} className="flex items-center">
              {i > 0 && <span className="mx-[5px] text-[#777]"><Chevron /></span>}
              <button className="px-[3px]">{crumb}</button>
            </div>
          ))}
        </nav>
        <button aria-label="Previous locations" className="ml-auto mr-0.5 text-[#666]"><Chevron dir="down" className="w-2.5 h-2.5" /></button>
        <button aria-label="Refresh" className="flex items-center justify-center w-[18px] h-full border-l border-[#d9d9d9]">
          <svg viewBox="0 0 12 12" className="w-3 h-3">
            <path d="M9 2.500a4.200 4.200 0 1 1-5.500 0" fill="none" stroke="#666" strokeWidth="1.500" />
            <path d="M2 1h4v4z" fill="#666" />
          </svg>
        </button>
      </div>
      <div className="flex items-center w-[202px] h-[22px] ml-3 mr-3 pl-2 pr-2 border border-[#d9d9d9]">
        <input aria-label="Search folder" placeholder="Search VPN_6E3F" className="flex-1 min-w-0 outline-none placeholder:text-[#6d6d6d]" />
        <svg viewBox="0 0 12 12" className="w-3 h-3">
          <circle cx="7.500" cy="4.500" r="3.500" fill="none" stroke="#666" strokeWidth="1.500" />
          <path d="M5 7L.5 11.500" stroke="#666" strokeWidth="1.800" />
        </svg>
      </div>
    </div>
    <div className="flex flex-1 min-h-0">
      <ul className="w-[139px] overflow-hidden">
        {folderItems.map((item) => (
          <TreeItem
            key={item.label}
            icon={<FolderIcon />}
            label={item.label}
            selected={item.selected}
            className={item.nested ? 'pl-[88px]' : 'pl-20'}
          />
        ))}
      </ul>
      <VerticalScrollbar thumb="mt-[172px] h-[45px]" />
      <div className="flex flex-col flex-1 min-w-0 ml-1">
        <FileTable />
        <div className="mt-auto flex items-center h-[15px] bg-[#f0f0f0] text-[#505050]">
          <button aria-label="Scroll left" className="flex items-center justify-center w-[18px] shrink-0"><Chevron dir="left" className="w-2.5 h-2.5" /></button>
          <div className="flex-1 h-full bg-[#cdcdcd]" />
          <button aria-label="Scroll right" className="flex items-center justify-center w-[18px] shrink-0"><Chevron dir="right" className="w-2.5 h-2.5" /></button>
        </div>
      </div>
    </div>
    <footer className="flex items-center h-6 shrink-0 pl-3.5 pr-1.5 text-[#1e395b]">
      <span>3 items</span>
      <span className="ml-[22px]">1 item selected</span>
      <span className="ml-1.5">0 bytes</span>
      <div className="ml-auto flex items-center gap-1">
        <button aria-label="Details view" className="flex items-center justify-center w-[22px] h-[22px] bg-[#cce8f8] border border-[#26a0da]">
          <svg viewBox="0 0 16 16" className="w-4 h-4">
            <path d="M1.500 1.500h3v13h-3z" fill="#fff" stroke="#7b7b7b" />
            <path d="M2 4.500h2M2 8.500h2M2 12.500h2M6 4.500h10M6 8.500h10M6 12.500h10" stroke="#555" strokeDasharray="4 1" />
          </svg>
        </button>
        <button aria-label="Large icons view" className="flex items-center justify-center w-4 h-[22px]"><PictureIcon className="w-3.5 h-3.5" /></button>
      </div>
    </footer>
  </div>
);

/* ---------- desktop ---------- */

const desktopItems = [
  { label: 'Recycle Bin', icon: <RecycleBinIcon /> },
  { label: 'CCleaner', icon: <CCleanerIcon /> },
  { label: 'Adobe Acrobat', icon: <AcrobatIcon />, wrap: true },
  { label: 'Firefox', icon: <FirefoxIcon shortcut /> },
  { label: 'Google Chrome', icon: <ChromeIcon />, wrap: true },
  { label: 'VLC media player', icon: <VlcIcon />, wrap: true },
  { label: 'Microsoft Edge', icon: <EdgeIcon shortcut />, wrap: true },
  { label: 'Skype', icon: <SkypeIcon /> },
  { label: 'casesxxx.png', icon: <ImageFileIcon /> },
  { label: 'directlyen...', icon: <ImageFileIcon /> },
  { label: 'forumwar....', icon: <ImageFileIcon /> },
  { label: 'frombush....', icon: <ImageFileIcon /> },
  { label: 'interested...', icon: <WordIcon /> },
  { label: 'motherare.rtf', icon: <WordIcon /> },
  { label: 'northcivil.rtf', icon: <WordIcon /> },
  { label: 'oilthink.rtf', icon: <WordIcon /> },
  { label: 'pricepositiv...', icon: <ImageFileIcon /> },
  { label: 'repliesfat.rtf', icon: <WordIcon /> },
  { label: 'storeliterat...', icon: <WordIcon /> },
  { label: 'techcases.jpg', icon: <ImageFileIcon /> },
  { label: 'thingsgoo...', icon: <ImageFileIcon /> },
  { label: 'detectvm.vbs', icon: <ScriptIcon />, focused: true },
  { label: 'VPN_Lock.dat', icon: <BlankFileIcon /> }
];

const DesktopItem = ({ item }) => (
  <button
    className={clsx(
      'flex flex-col items-center w-[75px] text-white text-[11px] leading-[15px]',
      item.focused ? 'h-[67px] outline outline-1 outline-dashed outline-[#7d8490]' : 'h-[82px]'
    )}
  >
    {item.icon}
    <span className={clsx('mt-0.5 [text-shadow:0_1px_2px_rgba(0,0,0,0.4)]', item.wrap ? 'w-[66px]' : 'whitespace-nowrap')}>
      {item.label}
    </span>
  </button>
);

const Watermark = () => (
  <div className="absolute right-12 bottom-2 flex items-center gap-2 h-16 opacity-70 pointer-events-none font-[Roboto,sans-serif] text-[32px] text-[#c5d0e6]">
    <span>ANY</span>
    <svg viewBox="0 0 60 64" className="w-[60px] h-16">
      <path d="M13 38V3l44 26v5L15 60l-4-2v-5l34-20-26-15v28" fill="none" stroke="#dfe6f3" strokeWidth="3" strokeLinejoin="round" />
      <path d="M8 8l-4 3v42l4 1 29-19" fill="none" stroke="#dfe6f3" strokeWidth="3" strokeLinejoin="round" />
    </svg>
    <span>RUN</span>
  </div>
);

/* ---------- taskbar ---------- */

const SearchArt = () => (
  <svg viewBox="0 0 78 38" className="w-[78px] h-[38px] shrink-0">
    <path d="M0 38C2 22 8 14 18 12 24 2 46-2 58 6c14 3 20 16 20 32z" fill="#5d9b6b" />
    <path d="M22 8c10-8 26-8 36 0l-4 6H26z" fill="#7fb585" />
    <path d="M10 24c0-14 14-16 20-10 6-6 14-6 20 0 6-6 20-4 20 10 0 4-4 8-10 8H20c-6 0-10-4-10-8z" fill="#e0a23c" />
    <circle cx="39" cy="24" r="15" fill="#a5481f" />
    <circle cx="39" cy="24" r="12.500" fill="none" stroke="#dd8a3c" strokeWidth="3" strokeDasharray="2 2" />
    <circle cx="39" cy="24" r="8" fill="#0f7d63" />
    <circle cx="39" cy="24" r="2" fill="#e8c65a" />
    <circle cx="19" cy="21" r="5" fill="#3e7187" stroke="#8a4d22" strokeWidth="1.500" />
    <circle cx="59" cy="21" r="5" fill="#3e7187" stroke="#8a4d22" strokeWidth="1.500" />
    <path d="M6 38c0-6 4-9 8-7 3-6 12-4 12 7zM50 38c0-8 6-10 10-7 5-3 11 0 11 7z" fill="#cf7fd8" />
    <path d="M22 38l3-4 5 4zM48 38l5-5 4 5z" fill="#6a3bb0" />
  </svg>
);

const InstallerIcon = () => (
  <svg viewBox="0 0 24 24" className="w-6 h-6">
    <rect x="10" y="1" width="12" height="10" fill="#1e6fd0" stroke="#d8d8d8" strokeWidth="1.500" />
    <path d="M12 3h8l-6 6h-2z" fill="#69b5f3" />
    <path d="M12 12h9v3h-9z" fill="#c9c9c9" />
    <path d="M1 10h4v13H1z" fill="#e9e4d4" />
    <path d="M4 12l6-2v13H5z" fill="#b5b09f" />
    <circle cx="14" cy="17" r="6" fill="#d5dccf" stroke="#8d9488" />
    <path d="M14 17l5-3v5zM14 17l-5 2v-4z" fill="#5fae5c" />
    <circle cx="14" cy="17" r="1.500" fill="#333" />
  </svg>
);

const TaskButton = ({ label, children, className }) => (
  <button aria-label={label} className={clsx('flex items-center justify-center w-12 h-10', className)}>{children}</button>
);

const Taskbar = () => (
  <footer className="flex items-center h-10 shrink-0 bg-linear-to-r from-[#021a24] via-[#01121d] to-[#000a1e] text-white">
    <TaskButton label="Start">
      <svg viewBox="0 0 16 16" className="w-4 h-4">
        <path d="M0 2.300L6.800 1.300v6.200H0zM7.600 1.200L16 0v7.500H7.600zM0 8.300h6.800v6.300L0 13.700zM7.600 8.300H16V16l-8.400-1.200z" fill="#fff" />
      </svg>
    </TaskButton>
    <div className="flex items-center w-72 h-10 pl-3 bg-[#f2f2f2] border border-[#d0d0d0]">
      <svg viewBox="0 0 16 16" className="w-4 h-4 shrink-0">
        <circle cx="10" cy="6" r="5" fill="none" stroke="#222" strokeWidth="1.200" />
        <path d="M6.500 9.500L.5 15.500" stroke="#222" strokeWidth="1.200" />
      </svg>
      <input aria-label="Search" placeholder="Type here to search" className="ml-2.5 flex-1 min-w-0 text-sm outline-none placeholder:text-[#3a3a3a]" />
      <SearchArt />
    </div>
    <TaskButton label="Task view">
      <svg viewBox="0 0 16 16" className="w-4 h-4">
        <path d="M.5 0v2.500h10V0M.5 16v-2.500h10V16M.5 4.500h10v7H.5z" fill="none" stroke="#fff" />
        <path d="M14.500 0v3M14.500 9v7" stroke="#fff" />
        <path d="M13.500 4h2v3.500h-2z" fill="#fff" />
      </svg>
    </TaskButton>
    <div className="flex gap-px ml-[3px]">
      <TaskButton label="Microsoft Edge"><EdgeIcon className="w-6 h-6" /></TaskButton>
      <TaskButton label="File Explorer" className="bg-[#33444e] border-b-2 border-[#76b9ed]"><ExplorerIcon className="w-[22px] h-[22px]" /></TaskButton>
      <TaskButton label="Firefox"><FirefoxIcon className="w-6 h-6" /></TaskButton>
      <div className="flex justify-center w-12">
        <button aria-label="Installer" className="flex items-center justify-center w-10 h-10 border-b-2 border-[#76b9ed]"><InstallerIcon /></button>
      </div>
    </div>
    <div className="ml-auto flex items-center">
      <div className="flex items-center gap-2">
        <button aria-label="Hidden icons"><Chevron dir="up" className="w-4 h-4 [&_path]:stroke-[0.7]" /></button>
        <button aria-label="Meet now">
          <svg viewBox="0 0 16 16" className="w-4 h-4" fill="none" stroke="#fff">
            <rect x="2.500" y="5.500" width="7" height="6" rx="1" />
            <path d="M9.500 7.500l3-2v6l-3-2M4 2.500c2-1.500 6-1.500 8 0M4 14c2 1.500 6 1.500 8 0" />
          </svg>
        </button>
        <button aria-label="Network">
          <svg viewBox="0 0 16 16" className="w-4 h-4" fill="none" stroke="#fff">
            <path d="M5 3.500h10.500v8H4.500V7M10 11.500v3M6.500 14.500h7M.5 2.500h4v4h-4zM2.500 6.500v8h3" />
          </svg>
        </button>
        <button aria-label="Volume">
          <svg viewBox="0 0 16 16" className="w-4 h-4" fill="none" stroke="#fff">
            <path d="M.5 6h3L7 2.500v11L3.500 10h-3zM9 6c1 1.500 1 3 0 4.500M11.200 4c2 2.500 2 5.500 0 8M13.300 2.500c2.500 3.500 2.500 8 0 11" />
          </svg>
        </button>
      </div>
      <time className="w-[72px] text-center text-[11px] leading-[18px]">4:22 PM<br />1/3/2025</time>
      <button aria-label="Notifications" className="flex items-center justify-center w-8">
        <svg viewBox="0 0 16 16" className="w-4 h-4" fill="none" stroke="#fff">
          <path d="M.5.5h15v12h-5L8 15.500 5.500 12.500h-5z" />
        </svg>
      </button>
      <span className="w-px h-10 ml-3 mr-1 bg-[#4a5566]" />
    </div>
  </footer>
);

export default function App() {
  return (
    <div className="flex flex-col h-screen overflow-hidden font-['Open_Sans','Noto_Sans',sans-serif]">
      <main className="relative flex-1 min-h-0 overflow-hidden bg-[linear-gradient(80deg,#00b2ff_0%,#00a8ff_24%,#008cf0_45%,#0064d8_72%,#0448c0_88%,#0638b0_100%)]">
        <div className="grid grid-flow-col grid-rows-[repeat(6,108px)] justify-start pt-2 -ml-px">
          {desktopItems.map((item) => (
            <DesktopItem key={item.label} item={item} />
          ))}
        </div>
        <LibraryWindow />
        <VpnWindow />
        <Watermark />
      </main>
      <Taskbar />
    </div>
  );
}
